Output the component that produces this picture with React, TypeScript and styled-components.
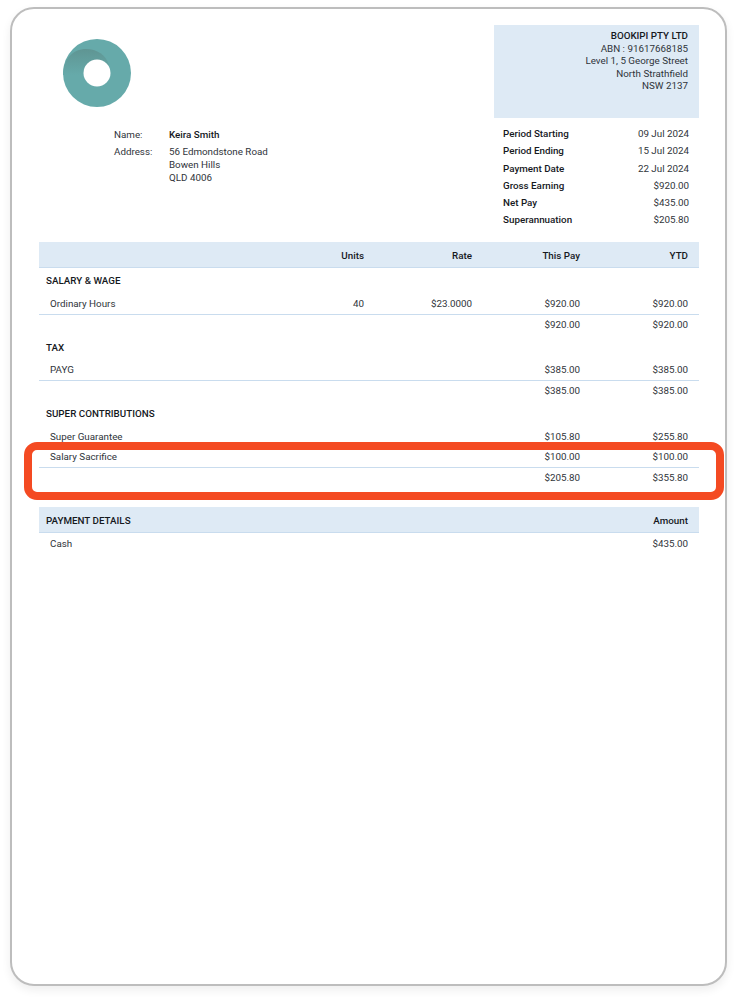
import React from "react";
import styled, { createGlobalStyle } from "styled-components";

const Global = createGlobalStyle`
  html, body { margin: 0; padding: 0; background: #fff; }
  body { font-family: Roboto, "Liberation Sans", sans-serif; color: #2f343a; }
`;

const Page = styled.div`
  position: relative;
  width: 737px;
  height: 1000px;
  padding: 7px 10px 0;
  box-sizing: border-box;
`;

const Sheet = styled.main`
  box-sizing: border-box;
  width: 717px;
  height: 979px;
  border: 2px solid #bdbdbd;
  border-radius: 24px;
  background: #fff;
  box-shadow: 0 4px 10px rgba(0, 0, 0, 0.07);
  padding: 16px 26px 0 27px;
  font-size: 9.8px;
  line-height: 12.5px;
`;

const Top = styled.section`
  display: grid;
  grid-template-columns: 1fr 205px;
`;

const LogoCell = styled.div`
  padding: 14px 0 0 24px;
  height: 93px;
  box-sizing: border-box;
`;

const CompanyBox = styled.div`
  height: 93px;
  box-sizing: border-box;
  background: #deeaf5;
  padding: 5px 11px 0 0;
  text-align: right;
`;

const CompanyName = styled.div`
  font-weight: 500;
  color: #16191e;
`;

const Employee = styled.dl`
  margin: 0;
  padding: 9.5px 0 0 75px;
  display: grid;
  grid-template-columns: 55px 1fr;
  grid-auto-rows: min-content;
  row-gap: 4.5px;
`;

const Term = styled.dt`
  margin: 0;
  line-height: 13px;
`;

const Value = styled.dd<{ $strong?: boolean }>`
  margin: 0;
  line-height: 13px;
  font-weight: ${(p) => (p.$strong ? 500 : 400)};
  color: ${(p) => (p.$strong ? "#16191e" : "inherit")};
`;

const Summary = styled.div`
  padding: 10px 10px 0 9px;
`;

const SummaryRow = styled.div`
  display: flex;
  justify-content: space-between;
  height: 17.3px;
`;

const SummaryLabel = styled.span`
  font-weight: 500;
  color: #16191e;
`;

const Table = styled.section<{ $gap: number }>`
  margin-top: ${(p) => p.$gap}px;
`;

const Row = styled.div<{ $h: number; $line?: boolean; $head?: boolean }>`
  display: grid;
  grid-template-columns: 1fr repeat(4, 108px);
  align-items: center;
  box-sizing: border-box;
  height: ${(p) => p.$h}px;
  padding: ${(p) => (p.$head ? "3px" : "0")} 11px 0;
  background: ${(p) => (p.$head ? "#deeaf5" : "transparent")};
  border-bottom: ${(p) => (p.$line ? "1px solid #c9dcee" : "none")};
`;

const Cell = styled.span<{ $bold?: boolean }>`
  text-align: right;
  font-weight: ${(p) => (p.$bold ? 500 : 400)};
  color: ${(p) => (p.$bold ? "#16191e" : "inherit")};
`;

const Label = styled.span`
  text-align: left;
`;

const Section = styled.span`
  margin-left: -4px;
  font-weight: 500;
  color: #16191e;
  white-space: nowrap;
`;

const PayRow = styled.div<{ $head?: boolean; $h: number }>`
  display: flex;
  justify-content: space-between;
  align-items: center;
  box-sizing: border-box;
  height: ${(p) => p.$h}px;
  padding: ${(p) => (p.$head ? "3px" : "0")} 11px 0;
  background: ${(p) => (p.$head ? "#deeaf5" : "transparent")};
  border-bottom: ${(p) => (p.$head ? "1px solid #c9dcee" : "none")};
`;

const Highlight = styled.div`
  position: absolute;
  left: 24px;
  top: 442px;
  width: 700px;
  height: 58px;
  box-sizing: border-box;
  border: 8px solid #f44a22;
  border-radius: 13px;
  pointer-events: none;
`;

const Logo = () => (
  <svg width="68" height="68" viewBox="0 0 68 68" aria-label="Logo">
    <defs>
      <linearGradient id="shade" x1="0" y1="0" x2="0" y2="1">
        <stop offset="0" stopColor="#5f9593" />
        <stop offset="1" stopColor="#66aaaa" />
      </linearGradient>
    </defs>
    <circle cx="34" cy="34" r="34" fill="#66aaaa" />
    <path d="M0 36 C0 20 10 10 23 10 C34 10 43 16 46 26 L34 36 Z" fill="url(#shade)" />
    <circle cx="34" cy="34" r="13.5" fill="#fff" />
  </svg>
);

const items = [
  ["Period Starting", "09 Jul 2024"],
  ["Period Ending", "15 Jul 2024"],
  ["Payment Date", "22 Jul 2024"],
  ["Gross Earning", "$920.00"],
  ["Net Pay", "$435.00"],
  ["Superannuation", "$205.80"],
];

const Line = ({ label, units, rate, a, b, h, line }: { label?: string; units?: string; rate?: string; a: string; b: string; h: number; line?: boolean }) => (
  <Row $h={h} $line={line}>
    <Label>{label}</Label>
    <Cell>{units}</Cell>
    <Cell>{rate}</Cell>
    <Cell>{a}</Cell>
    <Cell>{b}</Cell>
  </Row>
);

const Heading = ({ children, h }: { children: string; h: number }) => (
  <Row $h={h}>
    <Section>{children}</Section>
  </Row>
);

export default function App() {
  return (
    <Page>
      <Global />
      <Sheet>
        <Top>
          <LogoCell>
            <Logo />
          </LogoCell>
          <CompanyBox>
            <CompanyName>BOOKIPI PTY LTD</CompanyName>
            <div>ABN : 91617668185</div>
            <div>Level 1, 5 George Street</div>
            <div>North Strathfield</div>
            <div>NSW 2137</div>
          </CompanyBox>
          <Employee>
            <Term>Name:</Term>
            <Value $strong>Keira Smith</Value>
            <Term>Address:</Term>
            <Value>
              56 Edmondstone Road
              <br />
              Bowen Hills
              <br />
              QLD 4006
            </Value>
          </Employee>
          <Summary>
            {items.map(([k, v]) => (
              <SummaryRow key={k}>
                <SummaryLabel>{k}</SummaryLabel>
                <span>{v}</span>
              </SummaryRow>
            ))}
          </Summary>
        </Top>
        <Table $gap={10.2}>
          <Row $h={26} $head $line>
            <span />
            <Cell $bold>Units</Cell>
            <Cell $bold>Rate</Cell>
            <Cell $bold>This Pay</Cell>
            <Cell $bold>YTD</Cell>
          </Row>
          <Heading h={27}>SALARY &amp; WAGE</Heading>
          <Line label="Ordinary Hours" units="40" rate="$23.0000" a="$920.00" b="$920.00" h={20} line />
          <Line a="$920.00" b="$920.00" h={20} />
          <Heading h={26}>TAX</Heading>
          <Line label="PAYG" a="$385.00" b="$385.00" h={20} line />
          <Line a="$385.00" b="$385.00" h={20} />
          <Heading h={26}>SUPER CONTRIBUTIONS</Heading>
          <Line label="Super Guarantee" a="$105.80" b="$255.80" h={21} />
          <Line label="Salary Sacrifice" a="$100.00" b="$100.00" h={20} line />
          <Line a="$205.80" b="$355.80" h={20} />
        </Table>
        <Table $gap={19}>
          <PayRow $head $h={26}>
            <Section>PAYMENT DETAILS</Section>
            <Cell $bold>Amount</Cell>
          </PayRow>
          <PayRow $h={22}>
            <Label>Cash</Label>
            <span>$435.00</span>
          </PayRow>
        </Table>
      </Sheet>
      <Highlight />
    </Page>
  );
}
